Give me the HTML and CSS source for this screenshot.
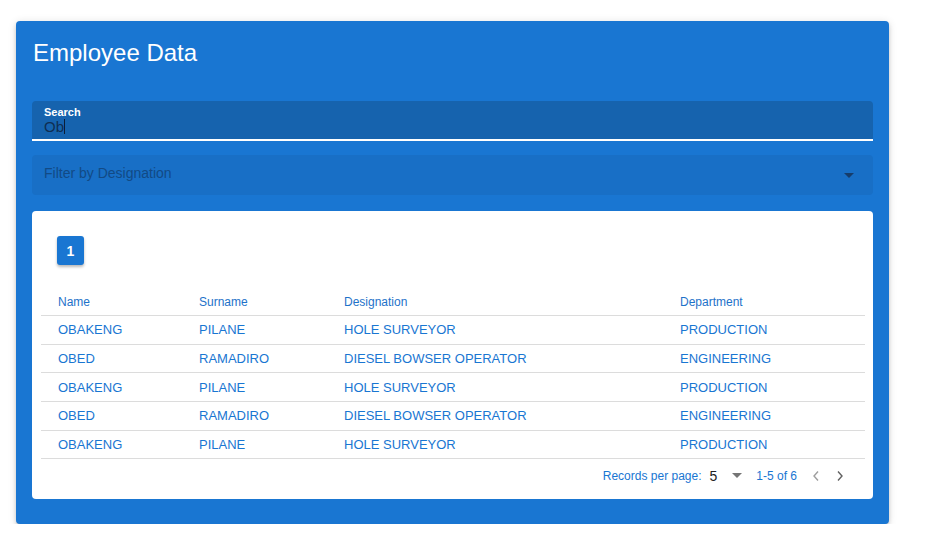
FILE: index.html
```html
<!DOCTYPE html>
<html>
<head>
<meta charset="utf-8">
<link rel="stylesheet" href="styles.css">
</head>
<body>
<div class="page">
  <div class="card">
    <h1 class="title">Employee Data</h1>
    <div class="field search">
      <div class="label">Search</div>
      <div class="value">Ob<span class="caret"></span></div>
    </div>
    <div class="field select">
      <div class="placeholder">Filter by Designation</div>
      <svg class="arrow" width="10" height="5" viewBox="0 0 10 5"><path d="M0 0 L10 0 L5 5 Z" fill="#163d6b"/></svg>
    </div>
    <div class="panel">
      <div class="pager"><button class="page-btn">1</button></div>
      <div class="table">
        <div class="row head"><span>Name</span><span>Surname</span><span>Designation</span><span>Department</span></div>
        <div class="row"><span>OBAKENG</span><span>PILANE</span><span>HOLE SURVEYOR</span><span>PRODUCTION</span></div>
        <div class="row"><span>OBED</span><span>RAMADIRO</span><span>DIESEL BOWSER OPERATOR</span><span>ENGINEERING</span></div>
        <div class="row"><span>OBAKENG</span><span>PILANE</span><span>HOLE SURVEYOR</span><span>PRODUCTION</span></div>
        <div class="row"><span>OBED</span><span>RAMADIRO</span><span>DIESEL BOWSER OPERATOR</span><span>ENGINEERING</span></div>
        <div class="row"><span>OBAKENG</span><span>PILANE</span><span>HOLE SURVEYOR</span><span>PRODUCTION</span></div>
      </div>
      <div class="footer">
        <span class="rpp">Records per page:</span>
        <span class="num">5</span>
        <svg class="sel-arrow" width="10" height="5" viewBox="0 0 10 5"><path d="M0 0 L10 0 L5 5 Z" fill="#757575"/></svg>
        <span class="range">1-5 of 6</span>
        <svg class="chev" width="8" height="12" viewBox="0 0 8 12"><path d="M6 1.5 L2 6 L6 10.5" fill="none" stroke="#9e9e9e" stroke-width="1.4"/></svg>
        <svg class="chev" width="8" height="12" viewBox="0 0 8 12"><path d="M2 1.5 L6 6 L2 10.5" fill="none" stroke="#616161" stroke-width="1.4"/></svg>
      </div>
    </div>
  </div>
</div>
</body>
</html>
```

FILE: styles.css
```css
* { box-sizing: border-box; }
body {
  margin: 0;
  background: #fff;
  font-family: "Liberation Sans", Arial, sans-serif;
}
.page {
  padding: 21px 0 0 16px;
}
.card {
  width: 873px;
  height: 503px;
  background: #1976d2;
  border-radius: 4px;
  box-shadow: 0 3px 3px -2px rgba(0,0,0,.2), 0 3px 4px 0 rgba(0,0,0,.14), 0 1px 8px 0 rgba(0,0,0,.12);
  padding: 16px 16px 24px 16px;
}
.title {
  margin: 0 0 0 1px;
  font-size: 24px;
  line-height: 32px;
  font-weight: normal;
  color: #fff;
  height: 32px;
}
.field {
  height: 40px;
  border-radius: 4px 4px 0 0;
  position: relative;
}
.search {
  margin-top: 32px;
  background: #1663ae;
  border-bottom: 2px solid #fff;
  padding: 5px 12px 0 12px;
}
.label {
  color: #fff;
  font-size: 11px;
  font-weight: bold;
  line-height: 12px;
}
.value {
  color: #0f2e52;
  font-size: 15px;
  line-height: 17px;
  display: flex;
  align-items: center;
}
.caret {
  display: inline-block;
  width: 1px;
  height: 15px;
  background: #0b1e36;
}
.select {
  margin-top: 14px;
  background: #186fc6;
  border-radius: 4px;
  display: flex;
  align-items: center;
  justify-content: space-between;
  padding: 0 19px 0 12px;
  height: 40px;
}
.placeholder {
  color: #124a85;
  font-size: 14px;
  margin-top: -5px;
}
.arrow { margin-top: 1px; }
.panel {
  margin-top: 16px;
  background: #fff;
  border-radius: 4px;
  height: 288px;
  padding: 25px 8px 0 9px;
}
.pager {
  padding-left: 16px;
  height: 29px;
}
.page-btn {
  width: 27px;
  height: 29px;
  border: none;
  border-radius: 3px;
  background: #1976d2;
  color: #fff;
  font-family: "Liberation Sans", Arial, sans-serif;
  font-size: 14px;
  font-weight: bold;
  padding: 0;
  box-shadow: 0 2px 3px rgba(0,0,0,.28);
}
.table {
  margin-top: 23px;
}
.row {
  display: grid;
  grid-template-columns: 141px 145px 336px 1fr;
  border-bottom: 1px solid #dcdcdc;
  height: 28.7px;
  align-items: center;
  color: #1976d2;
  font-size: 13px;
}
.row span { padding-left: 17px; }
.row.head {
  height: 28px;
  font-size: 12px;
  color: #1e72c9;
}
.footer {
  display: flex;
  align-items: center;
  justify-content: flex-end;
  height: 33px;
  padding-right: 21px;
  color: #1976d2;
  font-size: 12px;
}
.num {
  color: #222;
  font-size: 14px;
  margin-left: 8px;
}
.sel-arrow { margin-left: 15px; }
.range { margin-left: 14px; }
.chev { margin-left: 15px; }
.chev + .chev { margin-left: 16px; }
```
